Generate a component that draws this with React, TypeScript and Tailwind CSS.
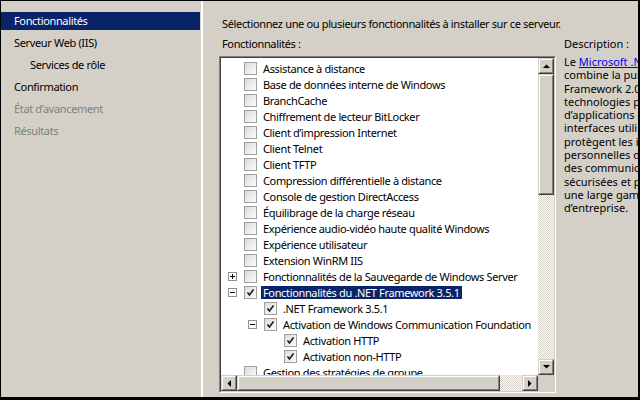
import clsx from 'clsx';

type Item = {
    label: string;
    level: number;
    exp?: '+' | '-';
    checked?: boolean;
    selected?: boolean;
};

const features: Item[] = [
    { label: 'Assistance à distance', level: 0 },
    { label: 'Base de données interne de Windows', level: 0 },
    { label: 'BranchCache', level: 0 },
    { label: 'Chiffrement de lecteur BitLocker', level: 0 },
    { label: 'Client d’impression Internet', level: 0 },
    { label: 'Client Telnet', level: 0 },
    { label: 'Client TFTP', level: 0 },
    { label: 'Compression différentielle à distance', level: 0 },
    { label: 'Console de gestion DirectAccess', level: 0 },
    { label: 'Équilibrage de la charge réseau', level: 0 },
    { label: 'Expérience audio-vidéo haute qualité Windows', level: 0 },
    { label: 'Expérience utilisateur', level: 0 },
    { label: 'Extension WinRM IIS', level: 0 },
    { label: 'Fonctionnalités de la Sauvegarde de Windows Server', level: 0, exp: '+' },
    { label: 'Fonctionnalités du .NET Framework 3.5.1', level: 0, exp: '-', checked: true, selected: true },
    { label: '.NET Framework 3.5.1', level: 1, checked: true },
    { label: 'Activation de Windows Communication Foundation', level: 1, exp: '-', checked: true },
    { label: 'Activation HTTP', level: 2, checked: true },
    { label: 'Activation non-HTTP', level: 2, checked: true },
    { label: 'Gestion des stratégies de groupe', level: 0 },
];

const indent = ['pl-[7px]', 'pl-[27px]', 'pl-[47px]'];

const description = [
    <>Le <span className="text-[#0000ee] underline">Microsoft .NET Framework 3.5.1</span></>,
    'combine la puissance des API .NET',
    'Framework 2.0 avec de nouvelles',
    'technologies pour la création',
    'd’applications qui offrent des',
    'interfaces utilisateur attrayantes,',
    'protègent les informations',
    'personnelles des clients, permettent',
    'des communications transparentes',
    'sécurisées et permettent de modéliser',
    'une large gamme de processus',
    'd’entreprise.',
];

const steps = [
    { label: 'Fonctionnalités', state: 'active' },
    { label: 'Serveur Web (IIS)', state: 'normal' },
    { label: 'Services de rôle', state: 'normal', sub: true },
    { label: 'Confirmation', state: 'normal' },
    { label: 'État d’avancement', state: 'disabled' },
    { label: 'Résultats', state: 'disabled' },
];

function Raised({ className, children }: { className?: string; children?: React.ReactNode }) {
    return (
        <div className={clsx('border border-t-[#d4d0c8] border-l-[#d4d0c8] border-r-[#404040] border-b-[#404040]', className)}>
            <div className="w-full h-full border border-t-white border-l-white border-r-[#808080] border-b-[#808080] bg-[#d4d0c8] flex items-center justify-center">
                {children}
            </div>
        </div>
    );
}

function Arrow({ dir }: { dir: 'up' | 'down' | 'left' | 'right' }) {
    const pts = {
        up: '0,4 7,4 3.5,0.5',
        down: '0,0 7,0 3.5,3.5',
        left: '4,0 4,7 0.5,3.5',
        right: '0,0 0,7 3.5,3.5',
    }[dir];
    const vert = dir === 'up' || dir === 'down';
    return (
        <svg width={vert ? 7 : 4} height={vert ? 4 : 7} viewBox={vert ? '0 0 7 4' : '0 0 4 7'}>
            <polygon points={pts} fill="#000" />
        </svg>
    );
}

const track = 'bg-[repeating-conic-gradient(#d4d0c8_0_25%,#ffffff_0_50%)] bg-[length:2px_2px]';

function Expander({ sign }: { sign: '+' | '-' }) {
    return (
        <div className="w-[9px] h-[9px] border border-[#919191] bg-white relative">
            <div className="absolute left-[1px] top-[3px] w-[5px] h-px bg-black" />
            {sign === '+' && <div className="absolute left-[3px] top-[1px] w-px h-[5px] bg-black" />}
        </div>
    );
}

function Checkbox({ checked }: { checked?: boolean }) {
    return (
        <div className="w-[13px] h-[13px] border border-[#a0a0a0] bg-gradient-to-br from-[#dcdcdc] to-[#fbfbfb] flex items-center justify-center">
            {checked && (
                <svg width="9" height="9" viewBox="0 0 9 9">
                    <path d="M1.5 4.5 L3.5 7 L7.5 1.5" stroke="#1c1c1c" strokeWidth="1.6" fill="none" />
                </svg>
            )}
        </div>
    );
}

export default function App() {
    return (
        <div className="w-[640px] h-[400px] bg-[#d4d0c8] border-t border-l border-r-2 border-b-[3px] border-black flex overflow-hidden font-['Noto_Sans',sans-serif] text-[11px] tracking-[-0.35px] text-black">
            {/* Wizard steps */}
            <nav className="w-[200px] shrink-0 pt-[11px] flex flex-col gap-[4px]">
                {steps.map(step => (
                    <div
                        key={step.label}
                        className={clsx(
                            'h-[18px] flex items-center mr-px',
                            step.sub ? 'pl-[29px]' : 'pl-[13px]',
                            step.state === 'active' && 'bg-[#0a246a] text-white',
                            step.state === 'disabled' && 'text-[#808080]'
                        )}
                    >
                        {step.label}
                    </div>
                ))}
            </nav>
            <div className="w-[2px] shrink-0 bg-white" />

            {/* Page */}
            <div className="flex-1 min-w-0 pl-[16px] pt-[15px] flex flex-col">
                <div className="h-[16px] pl-[3px] flex items-center whitespace-nowrap">
                    Sélectionnez une ou plusieurs fonctionnalités à installer sur ce serveur.
                </div>
                <div className="flex gap-[8px] mt-[4px]">
                    <div className="w-[337px] shrink-0 flex flex-col gap-[4px]">
                        <div className="h-[16px] pl-[3px] flex items-center">Fonctionnalités :</div>
                        {/* List box */}
                        <div className="h-[337px] border border-t-[#808080] border-l-[#808080] border-r-white border-b-white">
                            <div className="h-full border border-t-[#404040] border-l-[#404040] border-r-[#d4d0c8] border-b-[#d4d0c8] flex flex-col">
                                <div className="flex-1 flex min-h-0">
                                    <div className="flex-1 bg-white pt-[2px] overflow-hidden">
                                        {features.map(f => (
                                            <div key={f.label} className={clsx('h-[16px] flex items-center whitespace-nowrap', indent[f.level])}>
                                                <div className="w-[9px] shrink-0">{f.exp && <Expander sign={f.exp} />}</div>
                                                <div className="ml-[7px] shrink-0">
                                                    <Checkbox checked={f.checked} />
                                                </div>
                                                <span
                                                    className={clsx(
                                                        'ml-[4px] px-[2px] leading-[13px]',
                                                        f.selected && 'bg-[#0a246a] text-white'
                                                    )}
                                                >
                                                    {f.label}
                                                </span>
                                            </div>
                                        ))}
                                    </div>
                                    {/* Vertical scrollbar */}
                                    <div className="w-[16px] flex flex-col">
                                        <Raised className="h-[16px] shrink-0"><Arrow dir="up" /></Raised>
                                        <Raised className="h-[121px] shrink-0" />
                                        <div className={clsx('flex-1', track)} />
                                        <Raised className="h-[16px] shrink-0"><Arrow dir="down" /></Raised>
                                    </div>
                                </div>
                                {/* Horizontal scrollbar */}
                                <div className="h-[16px] flex shrink-0">
                                    <Raised className="w-[16px] shrink-0"><Arrow dir="left" /></Raised>
                                    <Raised className="w-[263px] shrink-0" />
                                    <div className={clsx('flex-1', track)} />
                                    <Raised className="w-[16px] shrink-0"><Arrow dir="right" /></Raised>
                                    <div className="w-[16px] shrink-0 bg-[#d4d0c8]" />
                                </div>
                            </div>
                        </div>
                    </div>

                    {/* Description */}
                    <div className="flex-1 min-w-0 overflow-hidden tracking-normal">
                        <div className="h-[16px] flex items-center whitespace-nowrap">Description :</div>
                        <div className="mt-[3px] leading-[13.3px] whitespace-nowrap">
                            {description.map((line, i) => (
                                <div key={i}>{line}</div>
                            ))}
                        </div>
                    </div>
                </div>
            </div>
        </div>
    );
}
